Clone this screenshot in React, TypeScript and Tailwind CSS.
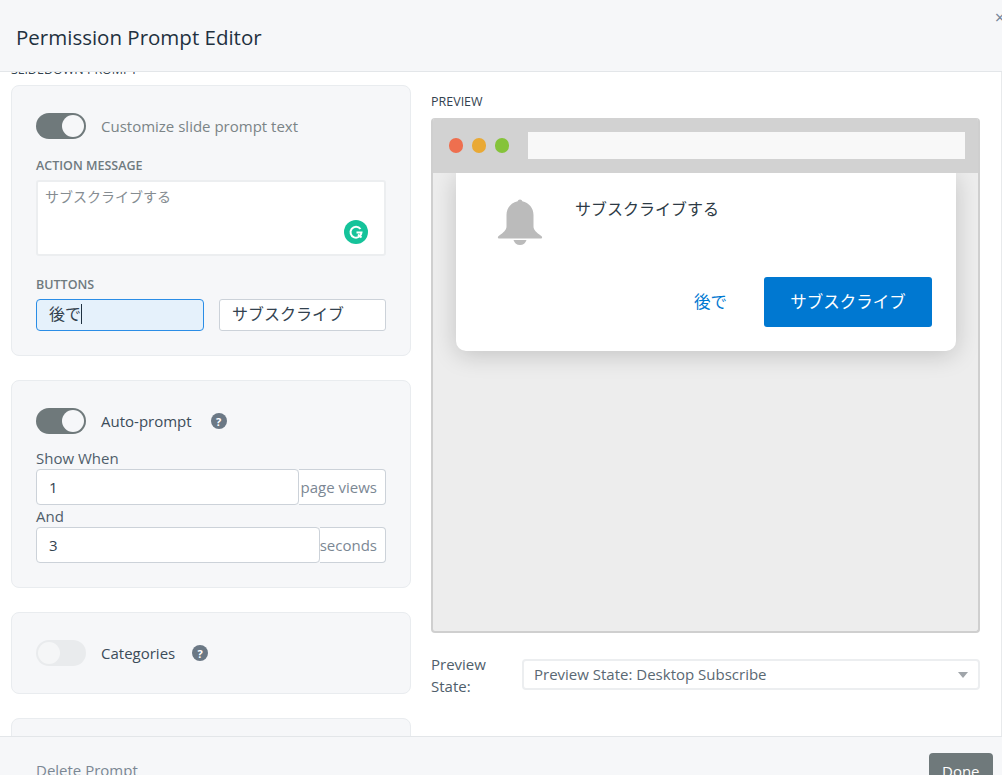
const sans = "font-['Open_Sans','Noto_Sans_CJK_JP',sans-serif]";

function Toggle({ on }: { on: boolean }) {
  return on ? (
    <div className="flex h-[26px] w-[50px] shrink-0 items-center justify-end rounded-full bg-[#6f797b] p-[2px]">
      <div className="h-[22px] w-[22px] rounded-full bg-[#f6f7f9]" />
    </div>
  ) : (
    <div className="flex h-[26px] w-[50px] shrink-0 items-center rounded-full bg-[#e9ebed] p-[2px]">
      <div className="h-[22px] w-[22px] rounded-full bg-[#f5f6f7]" />
    </div>
  );
}

function HelpDot() {
  return (
    <div className="flex h-4 w-4 items-center justify-center rounded-full bg-[#6b7885] text-[11px] leading-none font-bold text-white">
      ?
    </div>
  );
}

function Card({ children }: { children: React.ReactNode }) {
  return (
    <section className="shrink-0 rounded-[8px] border border-[#e9ecef] bg-[#f6f7f9] px-[24px]">
      {children}
    </section>
  );
}

function SuffixInput({ value, suffix, suffixClass }: { value: string; suffix: string; suffixClass: string }) {
  return (
    <div className="flex h-9 text-[15px]">
      <div className="flex flex-1 items-center rounded-[4px] border border-[#ccd2d9] bg-white pl-[12px] text-[#33424f]">
        {value}
      </div>
      <div
        className={`flex items-center justify-end rounded-r-[4px] border border-l-0 border-[#ccd2d9] bg-white pr-[8px] whitespace-nowrap text-[#7b8794] ${suffixClass}`}
      >
        {suffix}
      </div>
    </div>
  );
}

function Bell() {
  return (
    <svg viewBox="0 0 46 46" className="h-[46px] w-[46px] shrink-0">
      <path
        d="M23 0.500c1.200 0 2 .8 2.300 1.800C32 3.800 36.500 9 36.500 16v11.500c0 3.500 3 6 7.500 9.200 1.600 1.100 1.600 2.800-.6 2.800H2.600C.4 39.500.4 37.800 2 36.700c4.500-3.200 7.500-5.700 7.500-9.200V16c0-7 4.500-12.200 11.200-13.700.3-1 1.100-1.800 2.300-1.800z"
        fill="#bbbbbb"
      />
      <path d="M16.500 41h13c-.8 3-3.400 5-6.500 5s-5.700-2-6.500-5z" fill="#bbbbbb" />
    </svg>
  );
}

export default function App() {
  return (
    <div className={`relative flex h-[775px] w-full flex-col overflow-hidden bg-white ${sans}`}>
      <header className="flex h-[72px] shrink-0 items-center border-b border-[#e3e6e9] bg-[#f6f7f9] pt-[4px] pl-[16px] text-[20.500px] text-[#1f3140]">
        Permission Prompt Editor
      </header>
      <span className="absolute top-[4px] right-[-3px] text-[18px] text-[#76869a]">×</span>

      <main className="flex min-h-0 flex-1 overflow-hidden border-r border-[#e8eaec]">
        {/* left column, scrolled down a little */}
        <div className="-mt-[10px] flex w-[422px] shrink-0 flex-col px-[11px]">
          <div className="mb-[7px] h-[16px] text-[12.500px] leading-[16px] font-medium text-[#33424f]">
            SLIDEDOWN PROMPT
          </div>

          <div className="flex flex-col gap-[24px]">
            <Card>
              <div className="flex items-center gap-[15px] pt-[27px]">
                <Toggle on />
                <span className="text-[15px] text-[#7b8487]">Customize slide prompt text</span>
              </div>
              <div className="mt-[19px] text-[12.500px] leading-[16px] font-semibold text-[#6f7a7f]">
                ACTION MESSAGE
              </div>
              <div className="relative mt-[6px] h-[76px] rounded-[3px] border-2 border-[#eceef0] bg-white px-[7px] py-[4px] text-[14px] text-[#858c91]">
                サブスクライブする
                <div className="absolute right-[16px] bottom-[10px] flex h-6 w-6 items-center justify-center rounded-full bg-[#15c39a]">
                  <svg viewBox="0 0 16 16" className="h-[16px] w-[16px]" fill="none" stroke="white" strokeWidth="2">
                    <path d="M12.500 5A5.500 5.500 0 1 0 13.500 8.500H8.500" />
                    <path d="M10 10.500l3.500 3" />
                  </svg>
                </div>
              </div>
              <div className="mt-[21px] text-[12.500px] leading-[16px] font-semibold text-[#6f7a7f]">BUTTONS</div>
              <div className="mt-[6px] flex gap-[15px] pb-[24px] text-[16px] text-[#33424f]">
                <div className="flex h-[32px] w-[168px] items-center rounded-[4px] border border-[#2a8de6] bg-[#e5f1fb] pb-[2px] pl-[12px]">
                  後で
                  <span className="h-[20px] w-px bg-[#1f3140]" />
                </div>
                <div className="flex h-[32px] flex-1 items-center rounded-[3px] border border-[#ccd2d9] bg-white pb-[2px] pl-[12px]">
                  サブスクライブ
                </div>
              </div>
            </Card>

            <Card>
              <div className="flex items-center pt-[27px]">
                <Toggle on />
                <span className="ml-[15px] text-[15px] text-[#3c4c59]">Auto-prompt</span>
                <div className="ml-[19px]">
                  <HelpDot />
                </div>
              </div>
              <div className="mt-[14px] text-[15px] leading-[21px] text-[#4f5e6b]">Show When</div>
              <SuffixInput value="1" suffix="page views" suffixClass="w-[87px]" />
              <div className="mt-[1px] text-[15px] leading-[21px] text-[#4f5e6b]">And</div>
              <SuffixInput value="3" suffix="seconds" suffixClass="w-[66px]" />
              <div className="h-[24px]" />
            </Card>

            <Card>
              <div className="flex items-center pt-[27px] pb-[27px]">
                <Toggle on={false} />
                <span className="ml-[15px] text-[15px] text-[#3c4c59]">Categories</span>
                <div className="ml-[17px]">
                  <HelpDot />
                </div>
              </div>
            </Card>

            <Card>
              <div className="h-[60px]" />
            </Card>
          </div>
        </div>

        {/* preview column */}
        <div className="flex flex-1 flex-col pt-[22px] pr-[21px] pl-[9px]">
          <div className="mb-[8px] h-[16px] text-[12.500px] leading-[16px] font-medium text-[#33424f]">PREVIEW</div>
          <div className="flex h-[515px] flex-col overflow-hidden rounded-[4px] border-x-2 border-b-2 border-[#cfcfcf] bg-[#ededed]">
            <div className="z-10 flex h-[55px] shrink-0 items-center gap-[9px] bg-[#d2d2d2] pr-[13px] pl-[16px]">
              <span className="h-[15px] w-[14px] rounded-full bg-[#ee6f4f]" />
              <span className="h-[15px] w-[14px] rounded-full bg-[#e9a935]" />
              <span className="h-[15px] w-[14px] rounded-full bg-[#85c33a]" />
              <div className="ml-[10px] h-[27px] flex-1 bg-[#f8f8f8]" />
            </div>
            <div className="mr-[22px] ml-[23px] flex h-[178px] flex-col rounded-b-[10px] bg-white shadow-[0_4px_24px_rgba(0,0,0,0.18)]">
              <div className="flex pt-[26px] pl-[41px]">
                <Bell />
                <span className="ml-[32px] text-[16px] leading-[20px] text-[#2d3a45]">サブスクライブする</span>
              </div>
              <div className="mt-[32px] flex items-center justify-end pr-[24px]">
                <span className="mr-[37px] text-[16.500px] text-[#0078d1]">後で</span>
                <div className="flex h-[50px] w-[168px] items-center justify-center rounded-[3px] bg-[#0078d1] text-[16.500px] text-white">
                  サブスクライブ
                </div>
              </div>
            </div>
          </div>

          <div className="mt-[20px] flex items-start">
            <div className="w-[91px] text-[15px] leading-[22px] text-[#4f5e6b]">
              Preview
              <br />
              State:
            </div>
            <div className="mt-[6px] flex h-[31px] flex-1 items-center justify-between rounded-[4px] border-2 border-[#eceef0] bg-white pr-[10px] pl-[10px] text-[15px] text-[#5a6873]">
              Preview State: Desktop Subscribe
              <span className="h-0 w-0 border-x-[5px] border-t-[6px] border-x-transparent border-t-[#a0a5aa]" />
            </div>
          </div>
        </div>
      </main>

      <footer className="flex h-[39px] shrink-0 items-start justify-between border-t border-[#e3e6e9] bg-[#f6f7f9] pr-[9px] pl-[36px] text-[15px]">
        <span className="mt-[23px] leading-[20px] text-[#7b8794]">Delete Prompt</span>
        <div className="mt-[16px] h-[40px] w-[64px] rounded-[4px] bg-[#6f797b] pt-[8px] pl-[13px] leading-[20px] text-white">
          Done
        </div>
      </footer>
    </div>
  );
}
